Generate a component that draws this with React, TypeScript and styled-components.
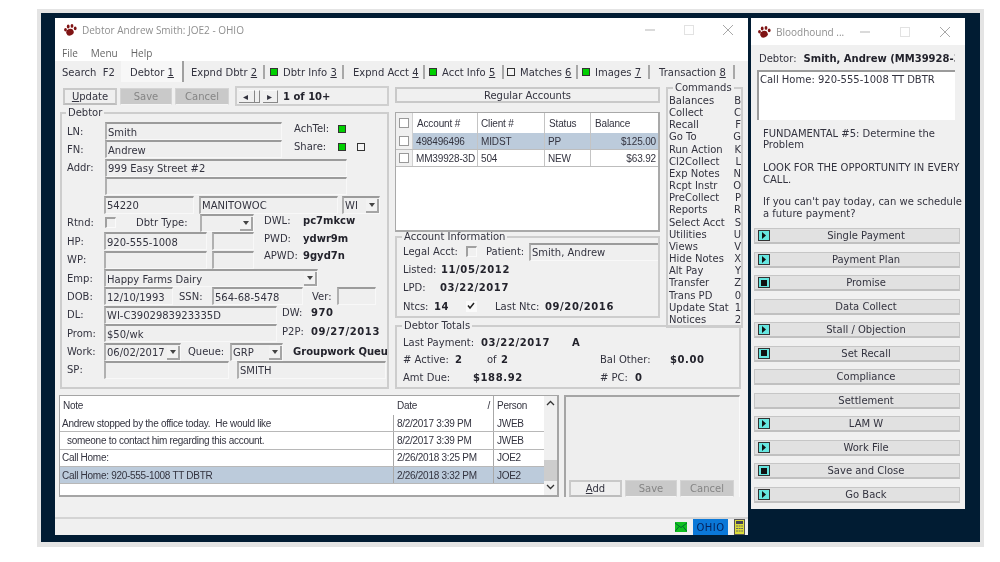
import React from "react";
import styled, {createGlobalStyle} from "styled-components";

const GlobalStyle = createGlobalStyle`
    html, body {
        margin: 0;
        padding: 0;
        background: #fff;
        overflow: hidden;
    }
    body {
        font-family: "DejaVu Sans", sans-serif;
        font-size: 10px;
        color: #33333f;
    }
`

const Page = styled.div`
    width: 1000px;
    height: 562px;
    padding: 9px 0 0 37px;
    box-sizing: border-box;
    filter: blur(0.3px);
`

const Frame = styled.div`
    width: 947px;
    height: 538px;
    box-sizing: border-box;
    border: 4px solid #e4e4e4;
    border-bottom-width: 5px;
    background: #011c33;
    padding: 5px 0 0 14px;
    display: flex;
    align-items: flex-start;
    gap: 3px;
`

const Win = styled.div<{ $w: number; $h: number }>`
    width: ${p => p.$w}px;
    height: ${p => p.$h}px;
    background: #f0f0f0;
    display: flex;
    flex-direction: column;
    flex: none;
    overflow: hidden;
`

const TitleBar = styled.div<{ $h: number; $pl: number }>`
    height: ${p => p.$h}px;
    background: #fff;
    display: flex;
    align-items: center;
    padding-left: ${p => p.$pl}px;
    font-family: "Open Sans", sans-serif;
    font-size: 10px;
    color: #8f8f8f;
    gap: 5px;
    flex: none;
`

const TitleText = styled.span`
    flex: 1;
    white-space: nowrap;
`

const WinButtons = styled.div<{ $gap: number; $pr: number }>`
    display: flex;
    gap: ${p => p.$gap}px;
    padding-right: ${p => p.$pr}px;
    align-items: center;
`

const MenuBar = styled.div`
    height: 19px;
    background: #fff;
    display: flex;
    gap: 13px;
    padding: 2px 0 0 7px;
    box-sizing: border-box;
    align-items: center;
    font-family: "Open Sans", sans-serif;
    font-size: 10px;
    color: #666;
    flex: none;
`

const TabBar = styled.div`
    height: 21px;
    display: flex;
    align-items: center;
    flex: none;
    padding-left: 7px;
    white-space: pre;
`

const Tab = styled.div<{ $w: number; $active?: boolean; $pl: number }>`
    width: ${p => p.$w}px;
    height: ${p => (p.$active ? 21 : 14)}px;
    box-sizing: border-box;
    flex: none;
    display: flex;
    align-items: center;
    gap: 5px;
    padding: 1px 0 0 ${p => p.$pl}px;
    background: ${p => (p.$active ? "#f7f7f7" : "transparent")};
    border-right: 2px solid ${p => (p.$active ? "#a0a0a0" : "#a8a8a8")};
    &:first-child {
        border-right: none;
    }
`

const Key = styled.span`
    text-decoration: underline;
`

const Led = styled.span<{ $on?: boolean; $ml?: number; $up?: number }>`
    width: 6px;
    height: 6px;
    flex: none;
    margin-left: ${p => p.$ml ?? 0}px;
    margin-bottom: ${p => (p.$up ?? 0) * 2}px;
    background: ${p => (p.$on ? "#00d000" : "#f4f4f4")};
    border: 1px solid #333;
    display: inline-block;
`

const Content = styled.div`
    flex: 1;
    display: flex;
    flex-direction: column;
    padding: 4px 0 0 5px;
`

const TopArea = styled.div`
    height: 303px;
    display: flex;
    gap: 6px;
`

const LeftCol = styled.div`
    width: 329px;
    display: flex;
    flex-direction: column;
`

const Toolbar = styled.div`
    height: 20px;
    display: flex;
    align-items: center;
    gap: 3px;
    padding-left: 3px;
    margin-bottom: 2px;
`

const Btn = styled.div<{ $w: number; $off?: boolean }>`
    width: ${p => p.$w}px;
    height: 17px;
    box-sizing: border-box;
    display: flex;
    align-items: center;
    justify-content: center;
    background: ${p => (p.$off ? "#c9c9c9" : "#efefef")};
    color: ${p => (p.$off ? "#858585" : "#33333f")};
    border: ${p => (p.$off ? "1px solid #d4d4d4" : "2px solid #c9c9c9")};
    border-bottom-color: ${p => (p.$off ? "#f4f4f4" : "#bdbdbd")};
`

const NavBox = styled.div`
    width: 154px;
    height: 20px;
    box-sizing: border-box;
    border: 2px solid #cfcfcf;
    margin-left: 3px;
    display: flex;
    align-items: center;
    padding-left: 2px;
`

const NavBtn = styled.div<{ $w: number; $mr: number }>`
    width: ${p => p.$w}px;
    height: 13px;
    box-sizing: border-box;
    border-top: 1px solid #fafafa;
    border-right: 1px solid #888;
    border-bottom: 1px solid #888;
    display: flex;
    align-items: center;
    padding-left: 4px;
    margin-right: ${p => p.$mr}px;
`

const Group = styled.fieldset<{ $w?: number; $h: number; $pt?: number; $pl?: number; $pr?: number; $lg?: number; $mt?: number }>`
    margin: ${p => p.$mt ?? 0}px 0 0;
    width: ${p => (p.$w ? `${p.$w}px` : "auto")};
    height: ${p => p.$h}px;
    box-sizing: border-box;
    border: 2px solid #cdcdcd;
    padding: ${p => p.$pt ?? 3}px ${p => p.$pr ?? 2}px 0 ${p => p.$pl ?? 6}px;
    min-width: 0;
    overflow: hidden;
    flex: none;

    legend {
        font-size: 10px;
        line-height: 10px;
        padding: 0 2px;
        margin-left: ${p => p.$lg ?? -1}px;
    }
`

const FormRows = styled.div`
    display: grid;
    grid-auto-rows: 18px;
    row-gap: 0.38px;
`

const Row = styled.div`
    display: flex;
    align-items: center;
    min-width: 0;
    white-space: nowrap;
`

const Lbl = styled.span<{ $w?: number; $ml?: number; $up?: number }>`
    width: ${p => (p.$w ? `${p.$w}px` : "auto")};
    margin-left: ${p => p.$ml ?? 0}px;
    margin-bottom: ${p => (p.$up ?? 0) * 2}px;
    flex: none;
`

const Val = styled.b<{ $w?: number; $ml?: number; $up?: number; $tight?: boolean }>`
    width: ${p => (p.$w ? `${p.$w}px` : "auto")};
    margin-left: ${p => p.$ml ?? 0}px;
    margin-bottom: ${p => (p.$up ?? 0) * 2}px;
    flex: none;
    letter-spacing: ${p => (p.$tight ? 0 : 0.6)}px;
    color: #23232c;
`

const Field = styled.div<{ $w: number; $ml?: number }>`
    width: ${p => p.$w}px;
    height: 18px;
    margin-left: ${p => p.$ml ?? 0}px;
    box-sizing: border-box;
    flex: none;
    display: flex;
    align-items: center;
    justify-content: space-between;
    padding-left: 1px;
    padding-top: 1px;
    background: #efefef;
    border-top: 2px solid #9b9b9b;
    border-left: 2px solid #b0b0b0;
    border-right: 1px solid #f8f8f8;
    border-bottom: 1px solid #f8f8f8;
    overflow: hidden;
`

const DropArrow = styled.span`
    width: 13px;
    height: 14px;
    flex: none;
    background: #f2f2f2;
    border-right: 2px solid #a5a5a5;
    border-bottom: 2px solid #a5a5a5;
    box-sizing: border-box;
    display: flex;
    align-items: center;
    justify-content: center;
    &::after {
        content: "";
        border: 3px solid transparent;
        border-top: 4px solid #444;
        border-bottom: none;
    }
`

const Check = styled.span<{ $ml?: number; $white?: boolean }>`
    width: 11px;
    height: 11px;
    box-sizing: border-box;
    flex: none;
    margin-left: ${p => p.$ml ?? 0}px;
    background: ${p => (p.$white ? "#fafafa" : "transparent")};
    border-top: ${p => (p.$white ? "0" : "2px solid #a0a0a0")};
    border-left: ${p => (p.$white ? "0" : "2px solid #a0a0a0")};
    border-right: 1px solid #fafafa;
    border-bottom: 1px solid #fafafa;
    display: flex;
    align-items: center;
    justify-content: center;
`

const MidCol = styled.div`
    width: 348px;
    display: flex;
    flex-direction: column;
`

const MidTop = styled.div`
    height: 235px;
    display: flex;
    gap: 6px;
`

const AcctCol = styled.div`
    width: 265px;
    display: flex;
    flex-direction: column;
`

const WideBtn = styled.div`
    height: 16px;
    box-sizing: border-box;
    margin: 1px 0 9px;
    border: 2px solid #c9c9c9;
    display: flex;
    align-items: center;
    justify-content: center;
`

const AcctGrid = styled.div`
    height: 120px;
    box-sizing: border-box;
    background: #fff;
    border: 1px solid #a9a9a9;
    border-bottom-width: 2px;
    border-right-width: 2px;
    font-family: "Liberation Sans", sans-serif;
    font-size: 10px;
    letter-spacing: -0.15px;
    flex: none;
`

const AcctRow = styled.div<{ $sel?: boolean; $head?: boolean }>`
    height: ${p => (p.$head ? 20 : 17)}px;
    box-sizing: border-box;
    display: grid;
    grid-template-columns: 17px 65px 67px 46px 1fr;
    background: ${p => (p.$sel ? "#bccbdb" : "#fff")};
    border-bottom: ${p => (p.$head ? "none" : "1px solid #bdbdbd")};
`

const AcctCell = styled.div<{ $right?: boolean; $pl?: number }>`
    display: flex;
    align-items: center;
    justify-content: ${p => (p.$right ? "flex-end" : "flex-start")};
    padding: 0 2px 0 ${p => p.$pl ?? 3}px;
    border-right: 1px solid #c4c4c4;
    white-space: nowrap;
    &:last-child {
        border-right: none;
    }
`

const CheckCell = styled.div`
    background: #f0f0f0;
    border-right: 1px solid #d0d0d0;
    display: flex;
    align-items: center;
    justify-content: center;
`

const GridBox = styled.span`
    width: 10px;
    height: 10px;
    background: #fff;
    border: 1px solid #999;
    box-sizing: border-box;
`

const CmdList = styled.div`
    display: flex;
    flex-direction: column;
`

const CmdRow = styled.div`
    height: 12.17px;
    line-height: 12px;
    display: flex;
    justify-content: space-between;
    white-space: nowrap;
`

const InfoRow = styled.div<{ $h: number }>`
    height: ${p => p.$h}px;
    display: flex;
    align-items: center;
    white-space: nowrap;
`

const Bottom = styled.div`
    margin-top: 6px;
    height: 102px;
    display: flex;
    gap: 5px;
    margin-left: -1px;
`

const NotesGrid = styled.div`
    width: 500px;
    box-sizing: border-box;
    background: #fff;
    border: 1px solid #a5a5a5;
    border-bottom-width: 2px;
    border-right-width: 2px;
    display: flex;
    font-family: "Liberation Sans", sans-serif;
    font-size: 10px;
    letter-spacing: -0.28px;
`

const NotesBody = styled.div`
    flex: 1;
    display: flex;
    flex-direction: column;
`

const NoteRow = styled.div<{ $sel?: boolean; $head?: boolean }>`
    height: ${p => (p.$head ? 19 : 17.3)}px;
    box-sizing: border-box;
    display: grid;
    grid-template-columns: 334px 100px 1fr;
    background: ${p => (p.$sel ? "#bccbdb" : "#fff")};
    border-bottom: ${p => (p.$head ? "none" : "1px solid #b8b8b8")};
`

const NoteCell = styled.div<{ $pl?: number; $open?: boolean }>`
    display: flex;
    align-items: center;
    padding-left: ${p => p.$pl ?? 3}px;
    border-right: ${p => (p.$open ? "none" : "1px solid #a8a8a8")};
    white-space: pre;
    justify-content: space-between;
    padding-right: 3px;
    &:last-child {
        border-right: none;
    }
`

const ScrollBar = styled.div`
    width: 13px;
    background: #f0f0f0;
    display: flex;
    flex-direction: column;
    align-items: center;
    justify-content: space-between;
    flex: none;
`

const ScrollTrack = styled.div`
    flex: 1;
    width: 100%;
    display: flex;
    flex-direction: column;
    justify-content: flex-end;
`

const ScrollThumb = styled.div`
    height: 21px;
    background: #cdcdcd;
`

const Editor = styled.div`
    width: 176px;
    box-sizing: border-box;
    background: #eeeeee;
    border-top: 2px solid #a5a5a5;
    border-left: 2px solid #a5a5a5;
    border-right: 1px solid #fafafa;
    display: flex;
    flex-direction: column;
    justify-content: flex-end;
`

const EditorBtns = styled.div`
    display: flex;
    gap: 3px;
    padding-left: 3px;
    background: #f0f0f0;
`

const StatusBar = styled.div`
    margin: 20px 0 0 -5px;
    height: 18px;
    box-sizing: border-box;
    border-top: 2px solid #d4d4d4;
    display: flex;
    justify-content: flex-end;
    align-items: center;
    gap: 6px;
    padding-right: 3px;
`

const OhioTag = styled.div`
    width: 35px;
    height: 16px;
    background: #0b78d8;
    color: #06225a;
    letter-spacing: 0.5px;
    display: flex;
    align-items: center;
    justify-content: center;
`

const DebtorLine = styled.div`
    height: 25px;
    display: flex;
    align-items: center;
    padding: 2px 0 0 8px;
    margin-right: 10px;
    box-sizing: border-box;
    gap: 7px;
    white-space: nowrap;
    overflow: hidden;
    flex: none;
`

const NoteBox = styled.div`
    width: 198px;
    height: 50px;
    margin-left: 6px;
    box-sizing: border-box;
    background: #fff;
    border-top: 2px solid #9b9b9b;
    border-left: 2px solid #9b9b9b;
    padding: 2px 1px;
    flex: none;
`

const Script = styled.p`
    margin: 8px 0 7px 12px;
    line-height: 11.4px;
    white-space: pre-line;
    height: 93px;
    flex: none;
`

const ActionList = styled.div`
    display: flex;
    flex-direction: column;
    gap: 7.5px;
    padding-left: 3px;
`

const ActionBtn = styled.div`
    width: 206px;
    height: 16px;
    box-sizing: border-box;
    background: #e1e1e1;
    border: 1px solid #c6c6c6;
    border-bottom: 2px solid #c0c0c0;
    display: grid;
    grid-template-columns: 18px 1fr;
    align-items: center;
    text-align: center;
`

const ActionIcon = styled.span`
    width: 12px;
    height: 11px;
    margin-left: 3px;
    box-sizing: border-box;
    background: #66e6e0;
    border: 1px solid #333;
    display: flex;
    align-items: center;
    justify-content: center;
`

const Paw = () => (
    <svg width="13" height="12" viewBox="0 0 13 12">
        <g fill="#7f1414">
            <ellipse cx="6" cy="8.200" rx="3.800" ry="3.300" transform="rotate(-20 6 8.200)"/>
            <ellipse cx="1.500" cy="5.800" rx="1.400" ry="1.800"/>
            <ellipse cx="4.200" cy="2.600" rx="1.400" ry="2"/>
            <ellipse cx="8" cy="1.900" rx="1.400" ry="1.900"/>
            <ellipse cx="11.200" cy="4.400" rx="1.400" ry="1.800"/>
        </g>
    </svg>
)

const Min = () => (
    <svg width="10" height="10" viewBox="0 0 10 10"><path d="M0 5h10" stroke="#b5b5b5"/></svg>
)
const Max = () => (
    <svg width="10" height="10" viewBox="0 0 10 10"><rect x=".5" y=".5" width="9" height="9" fill="none" stroke="#e2e2e2"/></svg>
)
const Close = () => (
    <svg width="10" height="10" viewBox="0 0 10 10"><path d="M0 0l10 10M10 0L0 10" stroke="#a8a8a8"/></svg>
)

const Tick = () => (
    <svg width="8" height="8" viewBox="0 0 8 8"><path d="M1 3.500l2 2.500L7 1" fill="none" stroke="#222" strokeWidth="1.500"/></svg>
)

const Play = () => (
    <svg width="6" height="7" viewBox="0 0 6 7"><path d="M1 0l4 3.500L1 7z" fill="#111"/></svg>
)
const Stop = () => (
    <svg width="6" height="6" viewBox="0 0 6 6"><rect width="6" height="6" fill="#111"/></svg>
)

const MailIcon = () => (
    <svg width="12" height="10" viewBox="0 0 12 10">
        <rect width="12" height="10" fill="#10c020"/>
        <path d="M0 1l6 4.500L12 1M0 9.500l4-5M12 9.500L8 4.500" fill="none" stroke="#063" strokeWidth="1"/>
    </svg>
)

const CalcIcon = () => (
    <svg width="11" height="16" viewBox="0 0 11 16">
        <rect x=".5" y=".5" width="10" height="15" fill="#dede38" stroke="#555"/>
        <rect x="2" y="2" width="7" height="3" fill="#445"/>
        <path d="M2 7h7M2 9.500h7M2 12h7" stroke="#666" strokeDasharray="2 .6"/>
    </svg>
)

const tabs = [
    {w: 59, label: "Search  F2", key: "", pl: 0},
    {w: 63, label: "Debtor ", key: "1", active: true, pl: 9},
    {w: 81, label: "Expnd Dbtr ", key: "2", pl: 7},
    {w: 79, label: "Dbtr Info ", key: "3", led: true, pl: 5},
    {w: 81, label: "Expnd Acct ", key: "4", pl: 9},
    {w: 79, label: "Acct Info ", key: "5", led: true, pl: 4},
    {w: 74, label: "Matches ", key: "6", led: false, pl: 3},
    {w: 72, label: "Images ", key: "7", led: true, pl: 4},
    {w: 85, label: "Transaction ", key: "8", pl: 9},
]

const commands = [
    ["Balances", "B"], ["Collect", "C"], ["Recall", "F"], ["Go To", "G"], ["Run Action", "K"],
    ["Cl2Collect", "L"], ["Exp Notes", "N"], ["Rcpt Instr", "O"], ["PreCollect", "P"], ["Reports", "R"],
    ["Select Acct", "S"], ["Utilities", "U"], ["Views", "V"], ["Hide Notes", "X"], ["Alt Pay", "Y"],
    ["Transfer", "Z"], ["Trans PD", "0"], ["Update Stat", "1"], ["Notices", "2"],
]

const notes = [
    {note: "Andrew stopped by the office today.  He would like", date: "8/2/2017 3:39 PM", who: "JWEB"},
    {note: "  someone to contact him regarding this account.", date: "8/2/2017 3:39 PM", who: "JWEB"},
    {note: "Call Home:", date: "2/26/2018 3:25 PM", who: "JOE2"},
    {note: "Call Home: 920-555-1008 TT DBTR", date: "2/26/2018 3:32 PM", who: "JOE2", sel: true},
]

const actions: [string, "play" | "stop" | null][] = [
    ["Single Payment", "play"], ["Payment Plan", "play"], ["Promise", "stop"], ["Data Collect", null],
    ["Stall / Objection", "play"], ["Set Recall", "stop"], ["Compliance", null], ["Settlement", null],
    ["LAM W", "play"], ["Work File", "play"], ["Save and Close", "stop"], ["Go Back", "play"],
]

const App = () => {
    return (
        <Page>
            <GlobalStyle/>
            <Frame>
                <Win $w={693} $h={517}>
                    <TitleBar $h={24} $pl={9}>
                        <Paw/>
                        <TitleText>Debtor Andrew Smith: JOE2 - OHIO</TitleText>
                        <WinButtons $gap={29} $pr={15}><Min/><Max/><Close/></WinButtons>
                    </TitleBar>
                    <MenuBar><span>File</span><span>Menu</span><span>Help</span></MenuBar>
                    <TabBar>
                        {tabs.map(t => (
                            <Tab key={t.label} $w={t.w} $active={t.active} $pl={t.pl}>
                                {t.led !== undefined && <Led $on={t.led}/>}
                                <span>{t.label}{t.key && <Key>{t.key}</Key>}</span>
                            </Tab>
                        ))}
                    </TabBar>
                    <Content>
                        <TopArea>
                            <LeftCol>
                                <Toolbar>
                                    <Btn $w={54}><span><Key>U</Key>pdate</span></Btn>
                                    <Btn $w={52} $off>Save</Btn>
                                    <Btn $w={54} $off>Cancel</Btn>
                                    <NavBox>
                                        <NavBtn $w={16} $mr={0}>◂</NavBtn>
                                        <NavBtn $w={5} $mr={3}/>
                                        <NavBtn $w={15} $mr={5}>▸</NavBtn>
                                        <Val $tight>1 of 10+</Val>
                                    </NavBox>
                                </Toolbar>
                                <Group $h={281} $pt={4} $pl={5}>
                                    <legend>Debtor</legend>
                                    <FormRows>
                                        <Row>
                                            <Lbl $w={38}>LN:</Lbl>
                                            <Field $w={177}>Smith</Field>
                                            <Lbl $w={44} $ml={12} $up={3}>AchTel:</Lbl>
                                            <Led $on $up={2}/>
                                        </Row>
                                        <Row>
                                            <Lbl $w={38}>FN:</Lbl>
                                            <Field $w={177}>Andrew</Field>
                                            <Lbl $w={44} $ml={12} $up={3}>Share:</Lbl>
                                            <Led $on $up={2}/>
                                            <Led $ml={11} $up={2}/>
                                        </Row>
                                        <Row><Lbl $w={38}>Addr:</Lbl><Field $w={242}>999 Easy Street #2</Field></Row>
                                        <Row><Lbl $w={38}/><Field $w={242}/></Row>
                                        <Row>
                                            <Lbl $w={37}/>
                                            <Field $w={90}>54220</Field>
                                            <Field $w={139} $ml={5}>MANITOWOC</Field>
                                            <Field $w={38} $ml={4}>WI<DropArrow/></Field>
                                        </Row>
                                        <Row>
                                            <Lbl $w={38}>Rtnd:</Lbl>
                                            <Check/>
                                            <Lbl $w={64} $ml={20}>Dbtr Type:</Lbl>
                                            <Field $w={54}><span/><DropArrow/></Field>
                                            <Lbl $w={39} $ml={10} $up={2}>DWL:</Lbl>
                                            <Val $tight $up={2}>pc7mkcw</Val>
                                        </Row>
                                        <Row>
                                            <Lbl $w={37}>HP:</Lbl>
                                            <Field $w={103}>920-555-1008</Field>
                                            <Field $w={42} $ml={5}/>
                                            <Lbl $w={39} $ml={10} $up={3}>PWD:</Lbl>
                                            <Val $tight $up={3}>ydwr9m</Val>
                                        </Row>
                                        <Row>
                                            <Lbl $w={37}>WP:</Lbl>
                                            <Field $w={103}/>
                                            <Field $w={42} $ml={5}/>
                                            <Lbl $w={39} $ml={10} $up={4}>APWD:</Lbl>
                                            <Val $tight $up={4}>9gyd7n</Val>
                                        </Row>
                                        <Row>
                                            <Lbl $w={37}>Emp:</Lbl>
                                            <Field $w={214}>Happy Farms Dairy<DropArrow/></Field>
                                        </Row>
                                        <Row>
                                            <Lbl $w={37}>DOB:</Lbl>
                                            <Field $w={69}>12/10/1993</Field>
                                            <Lbl $w={33} $ml={6}>SSN:</Lbl>
                                            <Field $w={91}>564-68-5478</Field>
                                            <Lbl $w={25} $ml={9}>Ver:</Lbl>
                                            <Field $w={39}/>
                                        </Row>
                                        <Row>
                                            <Lbl $w={37}>DL:</Lbl>
                                            <Field $w={173}>WI-C3902983923335D</Field>
                                            <Lbl $w={29} $ml={5} $up={2}>DW:</Lbl>
                                            <Val $up={2}>970</Val>
                                        </Row>
                                        <Row>
                                            <Lbl $w={37}>Prom:</Lbl>
                                            <Field $w={173}>$50/wk</Field>
                                            <Lbl $w={29} $ml={5} $up={2}>P2P:</Lbl>
                                            <Val $up={2}>09/27/2013</Val>
                                        </Row>
                                        <Row>
                                            <Lbl $w={37}>Work:</Lbl>
                                            <Field $w={77}>06/02/2017<DropArrow/></Field>
                                            <Lbl $w={42} $ml={7}>Queue:</Lbl>
                                            <Field $w={53}>GRP<DropArrow/></Field>
                                            <Val $ml={10} $tight>Groupwork Queue</Val>
                                        </Row>
                                        <Row>
                                            <Lbl $w={37}>SP:</Lbl>
                                            <Field $w={125}/>
                                            <Field $w={149} $ml={8}>SMITH</Field>
                                        </Row>
                                    </FormRows>
                                </Group>
                            </LeftCol>
                            <MidCol>
                                <MidTop>
                                    <AcctCol>
                                        <WideBtn>Regular Accounts</WideBtn>
                                        <AcctGrid>
                                            <AcctRow $head>
                                                <CheckCell><GridBox/></CheckCell>
                                                <AcctCell $pl={4}>Account #</AcctCell>
                                                <AcctCell>Client #</AcctCell>
                                                <AcctCell $pl={4}>Status</AcctCell>
                                                <AcctCell $pl={4}>Balance</AcctCell>
                                            </AcctRow>
                                            <AcctRow $sel>
                                                <CheckCell><GridBox/></CheckCell>
                                                <AcctCell>498496496</AcctCell>
                                                <AcctCell>MIDST</AcctCell>
                                                <AcctCell>PP</AcctCell>
                                                <AcctCell $right>$125.00</AcctCell>
                                            </AcctRow>
                                            <AcctRow>
                                                <CheckCell><GridBox/></CheckCell>
                                                <AcctCell>MM39928-3D</AcctCell>
                                                <AcctCell>504</AcctCell>
                                                <AcctCell>NEW</AcctCell>
                                                <AcctCell $right>$63.92</AcctCell>
                                            </AcctRow>
                                        </AcctGrid>
                                        <Group $h={86} $pt={0}>
                                            <legend>Account Information</legend>
                                            <InfoRow $h={19}>
                                                <Lbl $w={54}>Legal Acct:</Lbl>
                                                <Check $ml={9}/>
                                                <Lbl $w={43} $ml={9}>Patient:</Lbl>
                                                <Field $w={135}>Smith, Andrew</Field>
                                            </InfoRow>
                                            <InfoRow $h={17}><Lbl $w={38}>Listed:</Lbl><Val>11/05/2012</Val></InfoRow>
                                            <InfoRow $h={19}><Lbl $w={37}>LPD:</Lbl><Val>03/22/2017</Val></InfoRow>
                                            <InfoRow $h={18}>
                                                <Lbl $w={31}>Ntcs:</Lbl>
                                                <Val $w={32}>14</Val>
                                                <Check $white><Tick/></Check>
                                                <Lbl $w={50} $ml={18}>Last Ntc:</Lbl>
                                                <Val>09/20/2016</Val>
                                            </InfoRow>
                                        </Group>
                                    </AcctCol>
                                    <Group $w={77} $h={245} $mt={-3} $pt={2} $pl={1} $pr={0} $lg={4}>
                                        <legend>Commands</legend>
                                        <CmdList>
                                            {commands.map(c => (
                                                <CmdRow key={c[0]}><span>{c[0]}</span><span>{c[1]}</span></CmdRow>
                                            ))}
                                        </CmdList>
                                    </Group>
                                </MidTop>
                                <Group $w={346} $h={68} $pt={2}>
                                    <legend>Debtor Totals</legend>
                                    <InfoRow $h={18}>
                                        <Lbl $w={78}>Last Payment:</Lbl>
                                        <Val $w={91}>03/22/2017</Val>
                                        <Val>A</Val>
                                    </InfoRow>
                                    <InfoRow $h={17}>
                                        <Lbl $w={52}># Active:</Lbl>
                                        <Val $w={32}>2</Val>
                                        <Lbl $w={14}>of</Lbl>
                                        <Val $w={99}>2</Val>
                                        <Lbl $w={70}>Bal Other:</Lbl>
                                        <Val>$0.00</Val>
                                    </InfoRow>
                                    <InfoRow $h={18}>
                                        <Lbl $w={70}>Amt Due:</Lbl>
                                        <Val $w={127}>$188.92</Val>
                                        <Lbl $w={35}># PC:</Lbl>
                                        <Val>0</Val>
                                    </InfoRow>
                                </Group>
                            </MidCol>
                        </TopArea>
                        <Bottom>
                            <NotesGrid>
                                <NotesBody>
                                    <NoteRow $head>
                                        <NoteCell $open>Note</NoteCell>
                                        <NoteCell>Date<span>/</span></NoteCell>
                                        <NoteCell>Person</NoteCell>
                                    </NoteRow>
                                    {notes.map(n => (
                                        <NoteRow key={n.note} $sel={n.sel}>
                                            <NoteCell $pl={2}>{n.note}</NoteCell>
                                            <NoteCell>{n.date}</NoteCell>
                                            <NoteCell>{n.who}</NoteCell>
                                        </NoteRow>
                                    ))}
                                </NotesBody>
                                <ScrollBar>
                                    <svg width="9" height="14" viewBox="0 0 9 14"><path d="M1 9l3.500-3.500L8 9" fill="none" stroke="#333" strokeWidth="1.300"/></svg>
                                    <ScrollTrack><ScrollThumb/></ScrollTrack>
                                    <svg width="9" height="14" viewBox="0 0 9 14"><path d="M1 4l3.500 3.500L8 4" fill="none" stroke="#333" strokeWidth="1.300"/></svg>
                                </ScrollBar>
                            </NotesGrid>
                            <Editor>
                                <EditorBtns>
                                    <Btn $w={53}><span><Key>A</Key>dd</span></Btn>
                                    <Btn $w={52} $off>Save</Btn>
                                    <Btn $w={54} $off>Cancel</Btn>
                                </EditorBtns>
                            </Editor>
                        </Bottom>
                        <StatusBar>
                            <MailIcon/>
                            <OhioTag>OHIO</OhioTag>
                            <CalcIcon/>
                        </StatusBar>
                    </Content>
                </Win>
                <Win $w={214} $h={491}>
                    <TitleBar $h={27} $pl={7}>
                        <Paw/>
                        <TitleText>Bloodhound ...</TitleText>
                        <WinButtons $gap={30} $pr={15}><Min/><Max/><Close/></WinButtons>
                    </TitleBar>
                    <DebtorLine>Debtor: <Val $tight>Smith, Andrew (MM39928-3D)</Val></DebtorLine>
                    <NoteBox>Call Home: 920-555-1008 TT DBTR</NoteBox>
                    <Script>{"FUNDAMENTAL #5: Determine the\nProblem\n\nLOOK FOR THE OPPORTUNITY IN EVERY\nCALL.\n\nIf you can't pay today, can we schedule\na future payment?"}</Script>
                    <ActionList>
                        {actions.map(([label, icon]) => (
                            <ActionBtn key={label}>
                                {icon ? <ActionIcon>{icon === "play" ? <Play/> : <Stop/>}</ActionIcon> : <span/>}
                                <span>{label}</span>
                            </ActionBtn>
                        ))}
                    </ActionList>
                </Win>
            </Frame>
        </Page>
    )
}

export default App;
